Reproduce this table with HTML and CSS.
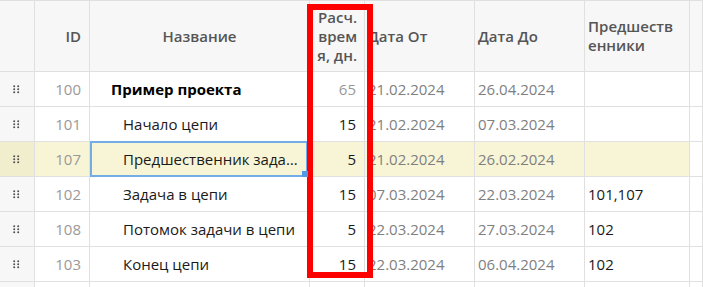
FILE: index.html
```html
<!DOCTYPE html>
<html lang="ru">
<head>
<meta charset="utf-8">
<title>Grid</title>
<link rel="stylesheet" href="styles.css">
</head>
<body>
<div class="grid">
  <div class="row head">
    <div class="cell handle-col"></div>
    <div class="cell right">ID</div>
    <div class="cell center">Название</div>
    <div class="cell right wrap">Расч. время, дн.</div>
    <div class="cell left">Дата От</div>
    <div class="cell left">Дата До</div>
    <div class="cell left wrap pred-h">Предшественники</div>
    <div class="cell"></div>
  </div>

  <div class="row">
    <div class="cell handle-col"><svg class="dots" width="7" height="9" viewBox="0 0 7 9"><circle cx="1.2" cy="1.2" r="1"/><circle cx="5.2" cy="1.2" r="1"/><circle cx="1.2" cy="4.2" r="1"/><circle cx="5.2" cy="4.2" r="1"/><circle cx="1.2" cy="7.2" r="1"/><circle cx="5.2" cy="7.2" r="1"/></svg></div>
    <div class="cell right muted">100</div>
    <div class="cell name lvl0">Пример проекта</div>
    <div class="cell right muted">65</div>
    <div class="cell left date">21.02.2024</div>
    <div class="cell left date">26.04.2024</div>
    <div class="cell left"></div>
    <div class="cell"></div>
  </div>

  <div class="row">
    <div class="cell handle-col"><svg class="dots" width="7" height="9" viewBox="0 0 7 9"><circle cx="1.2" cy="1.2" r="1"/><circle cx="5.2" cy="1.2" r="1"/><circle cx="1.2" cy="4.2" r="1"/><circle cx="5.2" cy="4.2" r="1"/><circle cx="1.2" cy="7.2" r="1"/><circle cx="5.2" cy="7.2" r="1"/></svg></div>
    <div class="cell right muted">101</div>
    <div class="cell name lvl1">Начало цепи</div>
    <div class="cell right">15</div>
    <div class="cell left date">21.02.2024</div>
    <div class="cell left date">07.03.2024</div>
    <div class="cell left"></div>
    <div class="cell"></div>
  </div>

  <div class="row selected">
    <div class="cell handle-col"><svg class="dots" width="7" height="9" viewBox="0 0 7 9"><circle cx="1.2" cy="1.2" r="1"/><circle cx="5.2" cy="1.2" r="1"/><circle cx="1.2" cy="4.2" r="1"/><circle cx="5.2" cy="4.2" r="1"/><circle cx="1.2" cy="7.2" r="1"/><circle cx="5.2" cy="7.2" r="1"/></svg></div>
    <div class="cell right muted">107</div>
    <div class="cell name lvl1 focused"><span class="ellipsis">Предшественник задачи в цепи</span><span class="fill-handle"></span></div>
    <div class="cell right">5</div>
    <div class="cell left date">21.02.2024</div>
    <div class="cell left date">26.02.2024</div>
    <div class="cell left"></div>
    <div class="cell plain"></div>
  </div>

  <div class="row">
    <div class="cell handle-col"><svg class="dots" width="7" height="9" viewBox="0 0 7 9"><circle cx="1.2" cy="1.2" r="1"/><circle cx="5.2" cy="1.2" r="1"/><circle cx="1.2" cy="4.2" r="1"/><circle cx="5.2" cy="4.2" r="1"/><circle cx="1.2" cy="7.2" r="1"/><circle cx="5.2" cy="7.2" r="1"/></svg></div>
    <div class="cell right muted">102</div>
    <div class="cell name lvl1">Задача в цепи</div>
    <div class="cell right">15</div>
    <div class="cell left date">07.03.2024</div>
    <div class="cell left date">22.03.2024</div>
    <div class="cell left">101,107</div>
    <div class="cell"></div>
  </div>

  <div class="row">
    <div class="cell handle-col"><svg class="dots" width="7" height="9" viewBox="0 0 7 9"><circle cx="1.2" cy="1.2" r="1"/><circle cx="5.2" cy="1.2" r="1"/><circle cx="1.2" cy="4.2" r="1"/><circle cx="5.2" cy="4.2" r="1"/><circle cx="1.2" cy="7.2" r="1"/><circle cx="5.2" cy="7.2" r="1"/></svg></div>
    <div class="cell right muted">108</div>
    <div class="cell name lvl1">Потомок задачи в цепи</div>
    <div class="cell right">5</div>
    <div class="cell left date">22.03.2024</div>
    <div class="cell left date">27.03.2024</div>
    <div class="cell left">102</div>
    <div class="cell"></div>
  </div>

  <div class="row">
    <div class="cell handle-col"><svg class="dots" width="7" height="9" viewBox="0 0 7 9"><circle cx="1.2" cy="1.2" r="1"/><circle cx="5.2" cy="1.2" r="1"/><circle cx="1.2" cy="4.2" r="1"/><circle cx="5.2" cy="4.2" r="1"/><circle cx="1.2" cy="7.2" r="1"/><circle cx="5.2" cy="7.2" r="1"/></svg></div>
    <div class="cell right muted">103</div>
    <div class="cell name lvl1">Конец цепи</div>
    <div class="cell right">15</div>
    <div class="cell left date">22.03.2024</div>
    <div class="cell left date">06.04.2024</div>
    <div class="cell left">102</div>
    <div class="cell"></div>
  </div>

  <div class="row tail">
    <div class="cell handle-col"></div>
    <div class="cell"></div>
    <div class="cell"></div>
    <div class="cell"></div>
    <div class="cell"></div>
    <div class="cell"></div>
    <div class="cell"></div>
    <div class="cell"></div>
  </div>

  <div class="highlight-box"></div>
</div>
</body>
</html>
```

FILE: styles.css
```css
* { box-sizing: border-box; }

html, body {
  margin: 0;
  padding: 0;
  background: #ffffff;
}

body {
  font-family: "Open Sans", "Noto Sans", sans-serif;
  font-size: 15px;
  color: #1a1a1a;
  width: 703px;
  height: 287px;
  overflow: hidden;
}

.grid {
  position: relative;
  width: 703px;
  height: 287px;
  overflow: hidden;
}

.row {
  display: grid;
  grid-template-columns: 35px 55px 220px 55px 110px 110px 105px 1fr;
  height: 35px;
  border-bottom: 1px solid #e0e0e0;
}

.row.tail { height: 6px; border-bottom: 0; }

.row.head {
  height: 72px;
  border-top: 1px solid #e0e0e0;
  background: #f7f7f7;
  font-weight: 600;
  color: #555555;
  line-height: 19px;
}

.cell {
  position: relative;
  display: flex;
  align-items: center;
  border-right: 1px solid #e0e0e0;
  min-width: 0;
  white-space: nowrap;
}

.head .cell { white-space: normal; }

.handle-col {
  background: #f7f7f7;
  justify-content: flex-start;
  padding-left: 13px;
}

.dots { display: block; fill: #505050; }

.right { justify-content: flex-end; text-align: right; padding-right: 8px; }
.center { justify-content: center; text-align: center; }
.left { justify-content: flex-start; padding-left: 3px; }

.wrap { word-break: break-all; }
.head .right.wrap { padding-left: 4px; padding-right: 7px; }
.pred-h { padding-right: 13px; }

.muted { color: #999999; }
.date { color: #808080; }

.name { padding-right: 8px; }
.lvl0 { padding-left: 21px; font-weight: 700; color: #000000; }
.lvl1 { padding-left: 33px; }

.ellipsis {
  overflow: hidden;
  text-overflow: ellipsis;
  white-space: nowrap;
  min-width: 0;
}

.row.selected { background: #f8f5d6; }
.row.selected .handle-col { background: #f1eecd; }
.row.selected .plain { background: #ffffff; }

.focused::after {
  content: "";
  position: absolute;
  top: -1px;
  left: 0;
  right: 1px;
  bottom: -1px;
  border: 2px solid #72ade8;
  pointer-events: none;
}

.fill-handle {
  position: absolute;
  right: 1px;
  bottom: -1px;
  width: 6px;
  height: 6px;
  background: #4f9be6;
  z-index: 2;
}

.highlight-box {
  position: absolute;
  left: 307px;
  top: 4px;
  width: 66px;
  height: 274px;
  border: 6px solid #ff0000;
  pointer-events: none;
}
```
